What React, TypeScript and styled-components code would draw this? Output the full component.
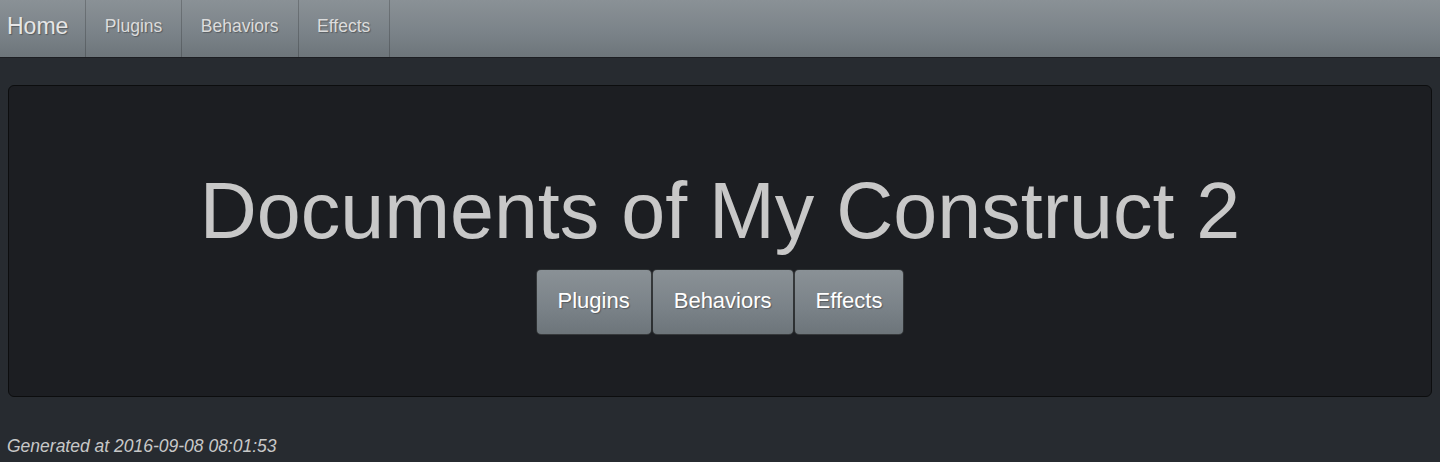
import React from "react";
import styled, { createGlobalStyle } from "styled-components";

const GlobalStyle = createGlobalStyle`
    html, body {
        margin: 0;
        padding: 0;
        background: #272b30;
        color: #c8c8c8;
        font-family: "Liberation Sans", Arial, sans-serif;
    }
`;

const NavBar = styled.nav`
    display: flex;
    align-items: stretch;
    height: 58px;
    background: linear-gradient(#8a9196, #7a8288 60%, #6d757a);
    border-bottom: 1px solid #1c1e22;
    box-sizing: border-box;
`;

const Brand = styled.a`
    display: flex;
    align-items: center;
    padding: 0 17px 4px 7px;
    font-size: 23px;
    color: #e6e6e6;
    text-shadow: 1px 1px 1px rgba(0, 0, 0, 0.3);
    border-right: 1px solid rgba(0, 0, 0, 0.2);
    text-decoration: none;
`;

const NavLink = styled.a`
    display: flex;
    align-items: center;
    padding: 0 19px 4px 18.5px;
    font-size: 17.5px;
    color: #dcdcdc;
    text-shadow: 1px 1px 1px rgba(0, 0, 0, 0.3);
    border-right: 1px solid rgba(0, 0, 0, 0.2);
    text-decoration: none;
`;

const Container = styled.div`
    padding: 27px 8px 0 8px;
`;

const Jumbotron = styled.section`
    display: flex;
    flex-direction: column;
    align-items: center;
    height: 312px;
    box-sizing: border-box;
    padding-top: 78px;
    background: #1c1e22;
    border: 1px solid #0c0d0e;
    border-radius: 6px;
`;

const Title = styled.h1`
    margin: 0;
    font-size: 79px;
    font-weight: 400;
    line-height: 1.2;
    color: #c8c8c8;
`;

const ButtonGroup = styled.div`
    display: flex;
    gap: 0;
    margin-top: 10px;
`;

const Button = styled.a`
    display: flex;
    align-items: center;
    height: 66px;
    box-sizing: border-box;
    padding: 0 21px 2px;
    font-size: 22px;
    color: #fff;
    text-decoration: none;
    text-shadow: 1px 1px 1px rgba(0, 0, 0, 0.3);
    background: linear-gradient(#8a9196, #7a8288 60%, #6d757a);
    border: 1px solid rgba(0, 0, 0, 0.6);
    border-radius: 5px;
`;

const Footer = styled.footer`
    padding: 39px 7px 0 7px;
    font-size: 17.5px;
    font-style: italic;
    color: #c8c8c8;
`;

export default function App() {
    return (
        <>
            <GlobalStyle />
            <NavBar>
                <Brand href="#">Home</Brand>
                <NavLink href="#">Plugins</NavLink>
                <NavLink href="#">Behaviors</NavLink>
                <NavLink href="#">Effects</NavLink>
            </NavBar>
            <Container>
                <Jumbotron>
                    <Title>Documents of My Construct 2</Title>
                    <ButtonGroup>
                        <Button href="#">Plugins</Button>
                        <Button href="#">Behaviors</Button>
                        <Button href="#">Effects</Button>
                    </ButtonGroup>
                </Jumbotron>
            </Container>
            <Footer>Generated at 2016-09-08 08:01:53</Footer>
        </>
    );
}
